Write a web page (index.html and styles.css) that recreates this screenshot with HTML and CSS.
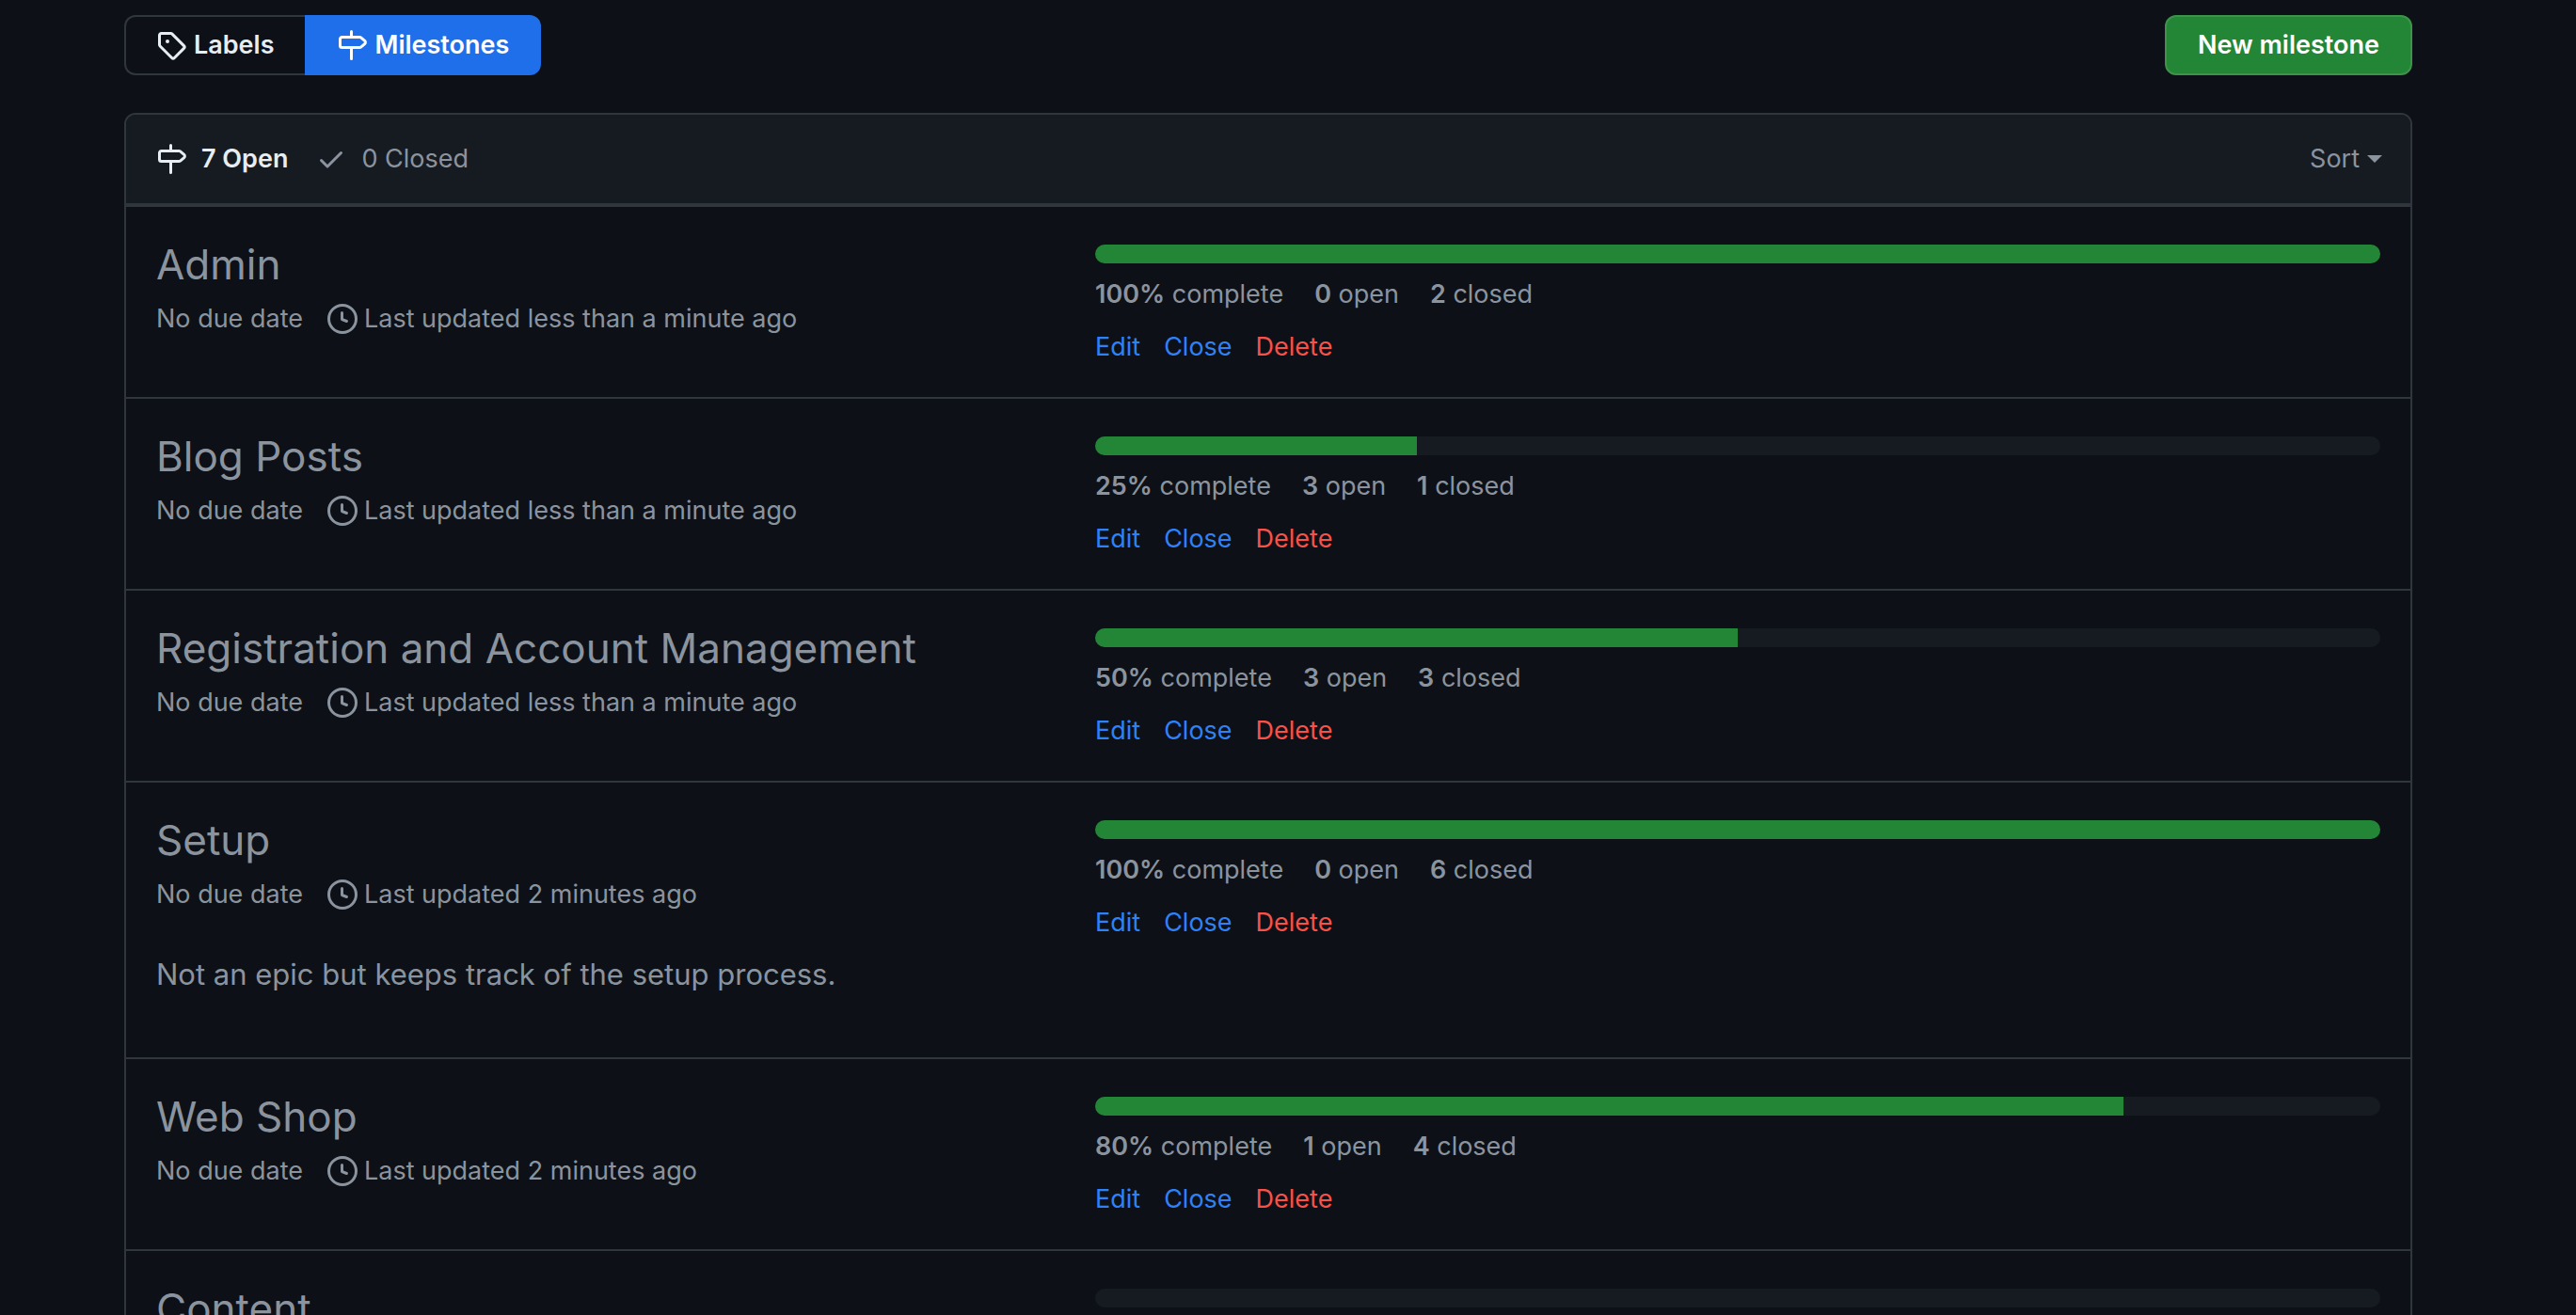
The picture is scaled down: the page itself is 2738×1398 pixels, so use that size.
FILE: index.html
```html
<!DOCTYPE html>
<html lang="en">
<head>
<meta charset="utf-8">
<title>Milestones</title>
<link rel="stylesheet" href="styles.css">
</head>
<body>
<svg class="sprite" aria-hidden="true">
  <symbol id="tag" viewBox="0 0 16 16"><path fill-rule="evenodd" d="M2.5 7.775V2.75a.25.25 0 01.25-.25h5.025a.25.25 0 01.177.073l6.25 6.25a.25.25 0 010 .354l-5.025 5.025a.25.25 0 01-.354 0l-6.25-6.25a.25.25 0 01-.073-.177zm-1.5 0V2.75C1 1.784 1.784 1 2.75 1h5.025c.464 0 .91.184 1.238.513l6.25 6.25a1.75 1.75 0 010 2.474l-5.026 5.026a1.75 1.75 0 01-2.474 0l-6.25-6.25A1.75 1.75 0 011 7.775zM6 5a1 1 0 100 2 1 1 0 000-2z"/></symbol>
  <symbol id="milestone" viewBox="0 0 16 16"><path fill-rule="evenodd" d="M7.75 0a.75.75 0 01.75.75V3h3.634c.414 0 .814.147 1.13.414l2.07 1.75a1.75 1.75 0 010 2.672l-2.07 1.75a1.75 1.75 0 01-1.13.414H8.5v5.25a.75.75 0 11-1.5 0V10H2.75A1.75 1.75 0 011 8.25v-3.5C1 3.784 1.784 3 2.75 3H7V.75A.75.75 0 017.75 0zm0 8.5h4.384a.25.25 0 00.161-.06l2.07-1.75a.25.25 0 000-.38l-2.07-1.75a.25.25 0 00-.161-.06H2.75a.25.25 0 00-.25.25v3.5c0 .138.112.25.25.25h5z"/></symbol>
  <symbol id="check" viewBox="0 0 16 16"><path d="M13.78 4.22a.75.75 0 010 1.06l-7.25 7.25a.75.75 0 01-1.06 0L2.22 9.28a.75.75 0 011.06-1.06L6 10.94l6.72-6.72a.75.75 0 011.06 0z"/></symbol>
  <symbol id="clock" viewBox="0 0 16 16"><path fill-rule="evenodd" d="M1.5 8a6.5 6.5 0 1113 0 6.5 6.5 0 01-13 0zM8 0a8 8 0 100 16A8 8 0 008 0zm.5 4.75a.75.75 0 00-1.5 0v3.5a.75.75 0 00.471.696l2.5 1a.75.75 0 00.557-1.392L8.5 7.742V4.75z"/></symbol>
</svg>
<main class="page">
  <div class="toolbar">
    <nav class="subnav">
      <a class="subnav-item" href="#labels"><svg class="icon"><use href="#tag"/></svg>Labels</a>
      <a class="subnav-item selected" href="#milestones"><svg class="icon"><use href="#milestone"/></svg>Milestones</a>
    </nav>
    <button class="btn-primary" type="button">New milestone</button>
  </div>

  <section class="box">
    <header class="box-header">
      <div class="states">
        <a class="state current" href="#open"><svg class="icon"><use href="#milestone"/></svg>7 Open</a>
        <a class="state" href="#closed"><svg class="icon"><use href="#check"/></svg>0 Closed</a>
      </div>
      <button class="sort" type="button">Sort<span class="caret"></span></button>
    </header>

    <article class="row">
      <div class="info">
        <h2 class="title"><a href="#admin">Admin</a></h2>
        <div class="meta"><span>No due date</span><span class="updated"><svg class="icon"><use href="#clock"/></svg>Last updated less than a minute ago</span></div>
      </div>
      <div class="status">
        <div class="progress"><div class="bar" style="width: 100%"></div></div>
        <div class="stats"><span><b>100%</b> complete</span><span><b>0</b> open</span><span><b>2</b> closed</span></div>
        <div class="actions"><a href="#edit">Edit</a><button type="button">Close</button><button class="danger" type="button">Delete</button></div>
      </div>
    </article>

    <article class="row">
      <div class="info">
        <h2 class="title"><a href="#blog-posts">Blog Posts</a></h2>
        <div class="meta"><span>No due date</span><span class="updated"><svg class="icon"><use href="#clock"/></svg>Last updated less than a minute ago</span></div>
      </div>
      <div class="status">
        <div class="progress"><div class="bar" style="width: 25%"></div></div>
        <div class="stats"><span><b>25%</b> complete</span><span><b>3</b> open</span><span><b>1</b> closed</span></div>
        <div class="actions"><a href="#edit">Edit</a><button type="button">Close</button><button class="danger" type="button">Delete</button></div>
      </div>
    </article>

    <article class="row">
      <div class="info">
        <h2 class="title"><a href="#registration">Registration and Account Management</a></h2>
        <div class="meta"><span>No due date</span><span class="updated"><svg class="icon"><use href="#clock"/></svg>Last updated less than a minute ago</span></div>
      </div>
      <div class="status">
        <div class="progress"><div class="bar" style="width: 50%"></div></div>
        <div class="stats"><span><b>50%</b> complete</span><span><b>3</b> open</span><span><b>3</b> closed</span></div>
        <div class="actions"><a href="#edit">Edit</a><button type="button">Close</button><button class="danger" type="button">Delete</button></div>
      </div>
    </article>

    <article class="row">
      <div class="info">
        <h2 class="title"><a href="#setup">Setup</a></h2>
        <div class="meta"><span>No due date</span><span class="updated"><svg class="icon"><use href="#clock"/></svg>Last updated 2 minutes ago</span></div>
        <p class="description">Not an epic but keeps track of the setup process.</p>
      </div>
      <div class="status">
        <div class="progress"><div class="bar" style="width: 100%"></div></div>
        <div class="stats"><span><b>100%</b> complete</span><span><b>0</b> open</span><span><b>6</b> closed</span></div>
        <div class="actions"><a href="#edit">Edit</a><button type="button">Close</button><button class="danger" type="button">Delete</button></div>
      </div>
    </article>

    <article class="row">
      <div class="info">
        <h2 class="title"><a href="#web-shop">Web Shop</a></h2>
        <div class="meta"><span>No due date</span><span class="updated"><svg class="icon"><use href="#clock"/></svg>Last updated 2 minutes ago</span></div>
      </div>
      <div class="status">
        <div class="progress"><div class="bar" style="width: 80%"></div></div>
        <div class="stats"><span><b>80%</b> complete</span><span><b>1</b> open</span><span><b>4</b> closed</span></div>
        <div class="actions"><a href="#edit">Edit</a><button type="button">Close</button><button class="danger" type="button">Delete</button></div>
      </div>
    </article>

    <article class="row">
      <div class="info">
        <h2 class="title"><a href="#content">Content</a></h2>
      </div>
      <div class="status">
        <div class="progress"></div>
      </div>
    </article>
  </section>
</main>
</body>
</html>
```
FILE: styles.css
```css
* {
  box-sizing: border-box;
}

body {
  margin: 0;
  height: 100vh;
  overflow: hidden;
  background: #0d1117;
  color: #8b949e;
  font-family: Inter, "Liberation Sans", sans-serif;
  font-size: 27px;
  line-height: 42px;
}

a {
  color: inherit;
  text-decoration: none;
}

button {
  padding: 0;
  border: 0;
  background: none;
  color: inherit;
  font: inherit;
  cursor: pointer;
}

.sprite {
  display: none;
}

.icon {
  flex: none;
  width: 32px;
  height: 32px;
  fill: currentColor;
}

.page {
  padding: 16px 174px 0 132px;
}

.toolbar {
  display: flex;
  justify-content: space-between;
  margin-bottom: 40px;
}

.subnav {
  display: flex;
}

.subnav-item {
  display: flex;
  align-items: center;
  gap: 8px;
  height: 64px;
  padding: 0 33px 0 32px;
  border: 2px solid #30363d;
  border-right: 0;
  border-radius: 12px 0 0 12px;
  color: #e6edf3;
  font-weight: 600;
}

.subnav-item.selected {
  padding: 0 34px;
  border: 0;
  border-radius: 0 12px 12px 0;
  background: #1f6feb;
  color: #fff;
}

.btn-primary {
  height: 64px;
  padding: 0 33px;
  border: 2px solid #3d9449;
  border-radius: 12px;
  background: #238636;
  color: #fff;
  font-weight: 600;
}

.box {
  border: 2px solid #30363d;
  border-radius: 12px;
  overflow: hidden;
}

.box-header {
  display: flex;
  align-items: center;
  justify-content: space-between;
  padding: 26px 30px 26px 32px;
  border-bottom: 2px solid #30363d;
  background: #161b22;
}

.states {
  display: flex;
  gap: 30px;
}

.state {
  display: flex;
  align-items: center;
  gap: 16px;
}

.state.current {
  color: #e6edf3;
  font-weight: 600;
}

.sort {
  display: flex;
  align-items: center;
  gap: 8px;
}

.caret {
  border: 8px solid transparent;
  border-top-color: currentColor;
  border-bottom: 0;
}

.row {
  display: grid;
  grid-template-columns: 966px 1fr;
  column-gap: 32px;
  padding: 32px;
  border-top: 2px solid #30363d;
}

.title {
  margin: 0 0 8px;
  font-size: 44px;
  font-weight: 400;
  line-height: 58px;
}

.meta {
  display: flex;
  gap: 26px;
}

.updated {
  display: flex;
  align-items: center;
  gap: 7px;
}

.description {
  margin: 40px 0 32px;
  font-size: 31px;
  line-height: 48px;
}

.progress {
  height: 20px;
  margin: 8px 0 12px;
  border-radius: 10px;
  background: #161b22;
  overflow: hidden;
}

.bar {
  height: 100%;
  background: #238636;
}

.stats {
  display: flex;
  gap: 33px;
  margin-bottom: 14px;
}

.stats b {
  font-weight: 600;
}

.actions {
  display: flex;
  gap: 25px;
  color: #2f81f7;
}

.actions .danger {
  color: #f85149;
}
```
